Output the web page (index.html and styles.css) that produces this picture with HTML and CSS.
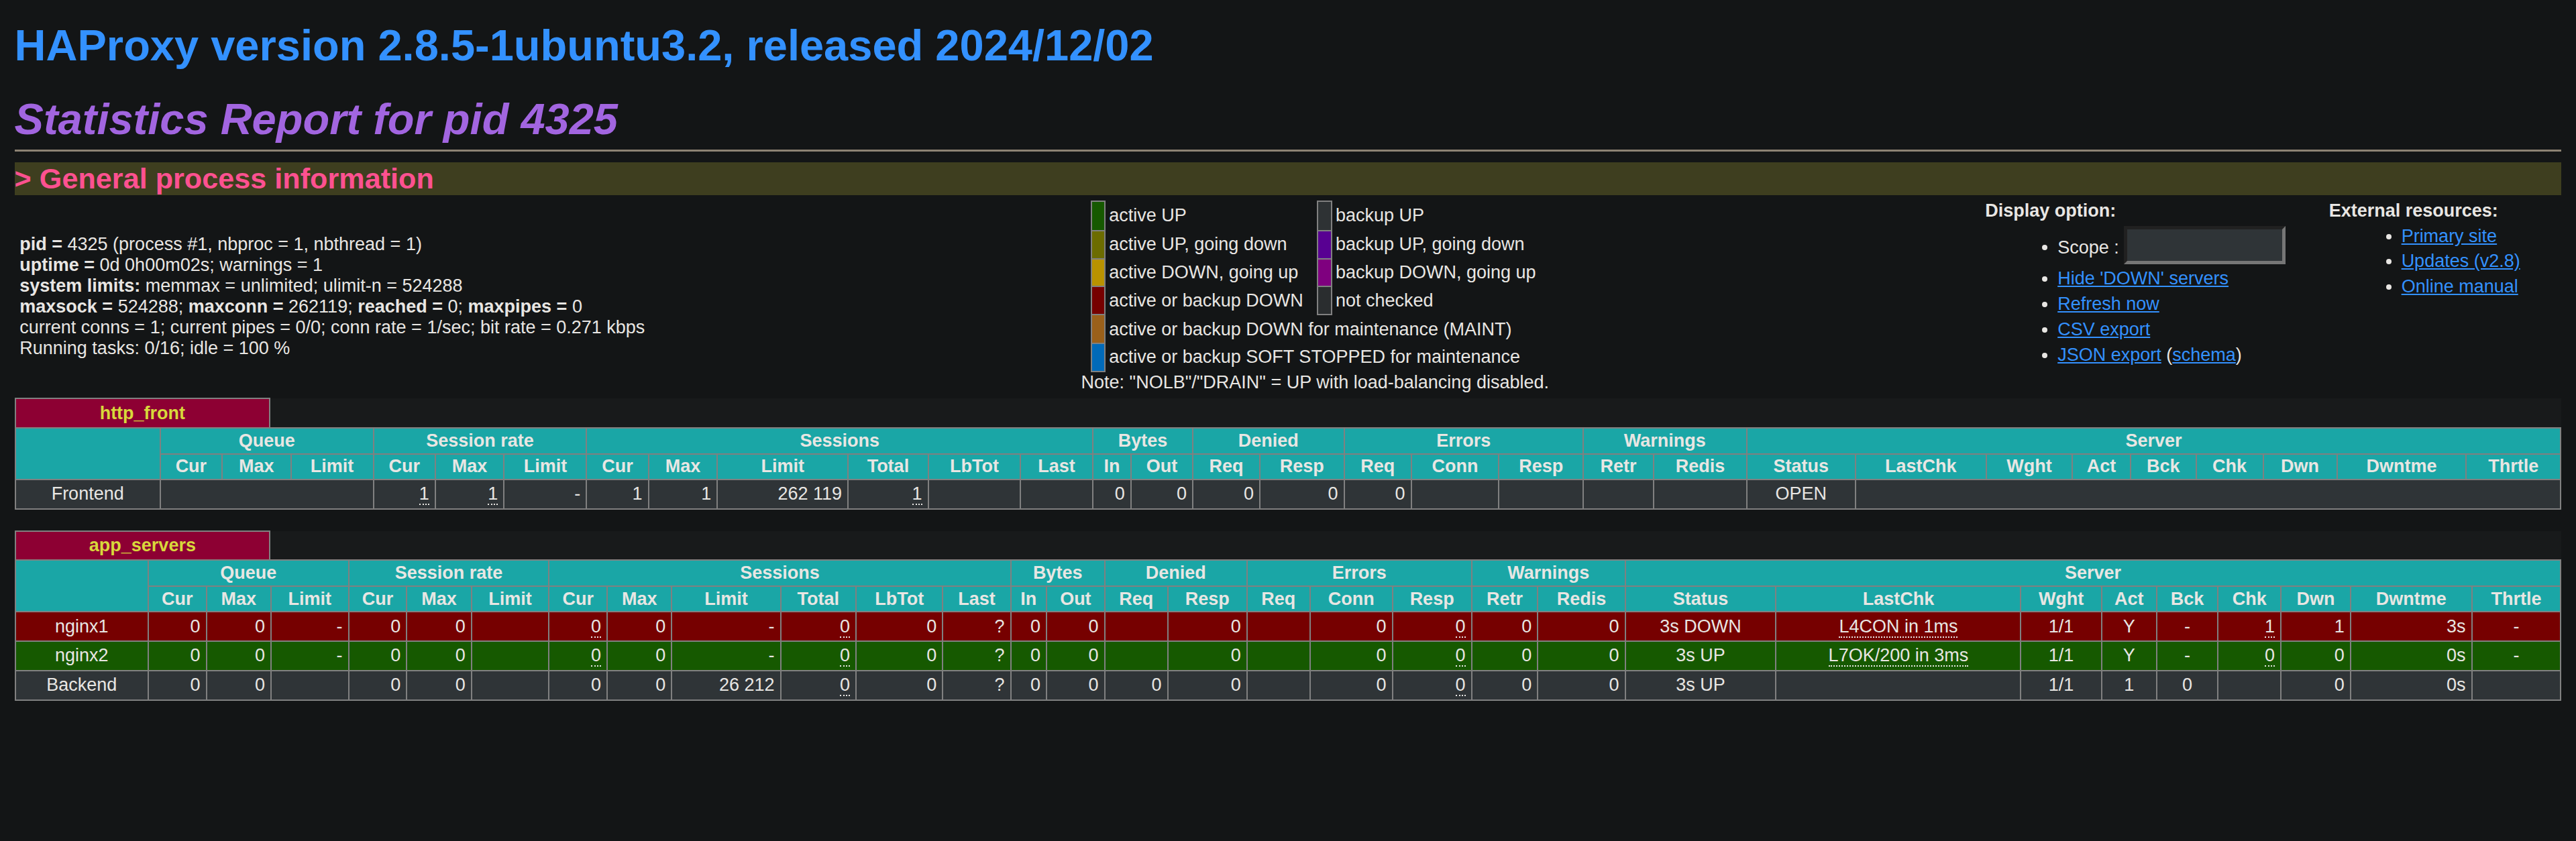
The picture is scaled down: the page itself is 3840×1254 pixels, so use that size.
FILE: index.html
```html
<!DOCTYPE html>
<html>
<head>
<meta charset="utf-8">
<title>Statistics Report for HAProxy</title>
<link rel="stylesheet" href="styles.css">
</head>
<body>
<h1 class="title"><a class="title-link" href="#">HAProxy version 2.8.5-1ubuntu3.2, released 2024/12/02</a></h1>
<h2 class="subtitle">Statistics Report for pid 4325</h2>
<hr class="hr">
<h3 class="section">&gt; General process information</h3>
<table class="info">
<tr>
<td class="col-proc"><p class="proc">
<b>pid = </b> 4325 (process #1, nbproc = 1, nbthread = 1)<br>
<b>uptime = </b> 0d 0h00m02s; warnings = 1<br>
<b>system limits:</b> memmax = unlimited; ulimit-n = 524288<br>
<b>maxsock = </b> 524288; <b>maxconn = </b> 262119; <b>reached = </b> 0; <b>maxpipes = </b> 0<br>
current conns = 1; current pipes = 0/0; conn rate = 1/sec; bit rate = 0.271 kbps<br>
Running tasks: 0/16; idle = 100 %</p>
</td>
<td class="col-legend">
<table class="lgd">
<tr><td class="active-up">&nbsp;</td><td class="noborder">active UP </td><td class="backup-up">&nbsp;</td><td class="noborder">backup UP </td></tr>
<tr><td class="active-going-down"></td><td class="noborder">active UP, going down </td><td class="backup-going-down"></td><td class="noborder">backup UP, going down </td></tr>
<tr><td class="active-going-up"></td><td class="noborder">active DOWN, going up </td><td class="backup-going-up"></td><td class="noborder">backup DOWN, going up </td></tr>
<tr><td class="active-down"></td><td class="noborder">active or backup DOWN &nbsp;</td><td class="no-check"></td><td class="noborder">not checked </td></tr>
<tr><td class="maintain"></td><td class="noborder" colspan="3">active or backup DOWN for maintenance (MAINT) &nbsp;</td></tr>
<tr><td class="draining"></td><td class="noborder" colspan="3">active or backup SOFT STOPPED for maintenance &nbsp;</td></tr>
</table>
Note: &quot;NOLB&quot;/&quot;DRAIN&quot; = UP with load-balancing disabled.</td>
<td class="col-opts"><b>Display option:</b><ul class="opts">
<li><div class="scope">Scope : <input class="scope-input" type="text" size="8"></div></li>
<li><a href="#">Hide 'DOWN' servers</a></li>
<li><a href="#">Refresh now</a></li>
<li><a href="#">CSV export</a></li>
<li><a href="#">JSON export</a> (<a href="#">schema</a>)</li>
</ul></td>
<td class="col-opts"><b>External resources:</b><ul class="opts">
<li><a href="#">Primary site</a></li>
<li><a href="#">Updates (v2.8)</a></li>
<li><a href="#">Online manual</a></li>
</ul></td>
</tr>
</table>

<div class="proxy">
<table class="tbl">
<tr class="titre"><th class="pxname"><a class="px" href="#">http_front</a></th><th class="empty"></th></tr>
</table>
<table class="tbl">
<tr class="titre"><th rowspan="2"></th><th colspan="3">Queue</th><th colspan="3">Session rate</th><th colspan="6">Sessions</th><th colspan="2">Bytes</th><th colspan="2">Denied</th><th colspan="3">Errors</th><th colspan="2">Warnings</th><th colspan="9">Server</th></tr>
<tr class="titre"><th>Cur</th><th>Max</th><th>Limit</th><th>Cur</th><th>Max</th><th>Limit</th><th>Cur</th><th>Max</th><th>Limit</th><th>Total</th><th>LbTot</th><th>Last</th><th>In</th><th>Out</th><th>Req</th><th>Resp</th><th>Req</th><th>Conn</th><th>Resp</th><th>Retr</th><th>Redis</th><th>Status</th><th>LastChk</th><th>Wght</th><th>Act</th><th>Bck</th><th>Chk</th><th>Dwn</th><th>Dwntme</th><th>Thrtle</th></tr>
<tr class="frontend"><td class="ac"><a class="lfsb" href="#">Frontend</a></td><td colspan="3"></td><td><u>1</u></td><td><u>1</u></td><td>-</td><td>1</td><td>1</td><td>262 119</td><td><u>1</u></td><td></td><td></td><td>0</td><td>0</td><td>0</td><td>0</td><td>0</td><td></td><td></td><td></td><td></td><td class="ac">OPEN</td><td colspan="8"></td></tr>
</table>
</div>

<div class="proxy">
<table class="tbl">
<tr class="titre"><th class="pxname"><a class="px" href="#">app_servers</a></th><th class="empty"></th></tr>
</table>
<table class="tbl">
<tr class="titre"><th rowspan="2"></th><th colspan="3">Queue</th><th colspan="3">Session rate</th><th colspan="6">Sessions</th><th colspan="2">Bytes</th><th colspan="2">Denied</th><th colspan="3">Errors</th><th colspan="2">Warnings</th><th colspan="9">Server</th></tr>
<tr class="titre"><th>Cur</th><th>Max</th><th>Limit</th><th>Cur</th><th>Max</th><th>Limit</th><th>Cur</th><th>Max</th><th>Limit</th><th>Total</th><th>LbTot</th><th>Last</th><th>In</th><th>Out</th><th>Req</th><th>Resp</th><th>Req</th><th>Conn</th><th>Resp</th><th>Retr</th><th>Redis</th><th>Status</th><th>LastChk</th><th>Wght</th><th>Act</th><th>Bck</th><th>Chk</th><th>Dwn</th><th>Dwntme</th><th>Thrtle</th></tr>
<tr class="row-down"><td class="ac"><a class="lfsb" href="#">nginx1</a></td><td>0</td><td>0</td><td>-</td><td>0</td><td>0</td><td></td><td><u>0</u></td><td>0</td><td>-</td><td><u>0</u></td><td>0</td><td>?</td><td>0</td><td>0</td><td></td><td>0</td><td></td><td>0</td><td><u>0</u></td><td>0</td><td>0</td><td class="ac">3s DOWN</td><td class="ac"><u>L4CON in 1ms</u></td><td class="ac">1/1</td><td class="ac">Y</td><td class="ac">-</td><td><u>1</u></td><td>1</td><td>3s</td><td class="ac">-</td></tr>
<tr class="row-up"><td class="ac"><a class="lfsb" href="#">nginx2</a></td><td>0</td><td>0</td><td>-</td><td>0</td><td>0</td><td></td><td><u>0</u></td><td>0</td><td>-</td><td><u>0</u></td><td>0</td><td>?</td><td>0</td><td>0</td><td></td><td>0</td><td></td><td>0</td><td><u>0</u></td><td>0</td><td>0</td><td class="ac">3s UP</td><td class="ac"><u>L7OK/200 in 3ms</u></td><td class="ac">1/1</td><td class="ac">Y</td><td class="ac">-</td><td><u>0</u></td><td>0</td><td>0s</td><td class="ac">-</td></tr>
<tr class="backend"><td class="ac"><a class="lfsb" href="#">Backend</a></td><td>0</td><td>0</td><td></td><td>0</td><td>0</td><td></td><td>0</td><td>0</td><td>26 212</td><td><u>0</u></td><td>0</td><td>?</td><td>0</td><td>0</td><td>0</td><td>0</td><td></td><td>0</td><td><u>0</u></td><td>0</td><td>0</td><td class="ac">3s UP</td><td class="ac"></td><td class="ac">1/1</td><td class="ac">1</td><td class="ac">0</td><td class="ac"></td><td>0</td><td>0s</td><td></td></tr>
</table>
</div>
</body>
</html>
```
FILE: styles.css
```css
html {
  background: #131516;
}
body {
  margin: 0 21.6px 21.6px;
  font-family: "Liberation Sans", Arial, Helvetica, sans-serif;
  font-size: 32.4px;
  font-weight: normal;
  color: #e8e6e3;
  background: #131516;
}
a {
  color: #3391ff;
}
.title {
  font-size: 65px;
  font-weight: bold;
  margin: 30px 0 35px;
}
.title-link {
  text-decoration: none;
  color: #3391ff;
}
.subtitle {
  font-size: 65px;
  font-weight: bold;
  font-style: italic;
  color: #a265e0;
  margin: 0;
}
.hr {
  margin: 8px 0 16px;
  border: 0;
  height: 3.3px;
  background: #8c8273;
}
.section {
  font-size: 43.2px;
  font-weight: bold;
  color: #ff5190;
  background: #3e3e1f;
  margin: 0;
}
.info {
  width: 100%;
  border-collapse: separate;
  border-spacing: 5.4px;
}
.info > tbody > tr > td {
  padding: 2.7px;
  font-size: 27px;
}
.col-proc {
  width: 1%;
  white-space: nowrap;
  text-align: left;
  vertical-align: middle;
}
.proc {
  margin: 27px 0;
}
.col-legend {
  text-align: center;
  white-space: nowrap;
  vertical-align: middle;
}
.col-opts {
  width: 1%;
  white-space: nowrap;
  text-align: left;
  vertical-align: top;
}
.opts {
  margin: 6.75px 0 27px;
  padding-left: 108px;
}
.opts li {
  margin-top: 6.75px;
  margin-right: 54px;
}
.scope-input {
  box-sizing: border-box;
  width: 241px;
  height: 57px;
  margin: 0;
  padding: 2.7px 5.4px;
  font-family: "Liberation Sans", Arial, sans-serif;
  font-size: 36px;
  color: #e8e6e3;
  background: #2f3437;
  border: 5px inset #767676;
  vertical-align: baseline;
}
.lgd {
  margin: 0 auto;
  border-collapse: collapse;
  text-align: left;
  font-size: 27px;
}
.lgd td {
  padding: 5.4px;
  border: 2.7px solid #808080;
}
.lgd td.noborder {
  border-style: none;
  white-space: nowrap;
}
.active-up { background: #165900; }
.active-going-down { background: #6c6c00; }
.active-going-up { background: #b99200; }
.active-down { background: #760000; }
.backup-up { background: #2e3234; }
.backup-going-down { background: #580092; }
.backup-going-up { background: #7f007f; }
.no-check { background: #2a2d2f; }
.maintain { background: #9a601a; }
.draining { background: #006ab9; }

.proxy {
  margin-bottom: 31px;
}
.tbl {
  width: 100%;
  border-collapse: collapse;
  border-style: none;
  font-size: 27px;
}
.tbl td {
  text-align: right;
  border: 2.7px solid #808080;
  padding: 5.4px 8.1px;
  white-space: nowrap;
}
.tbl td.ac {
  text-align: center;
}
.tbl th {
  border: 2.7px solid #808080;
  padding: 2.7px;
  font-weight: bold;
  white-space: nowrap;
}
.titre {
  background: #1aa6a6;
  color: #e8e6e3;
  text-align: center;
}
.tbl th.pxname {
  width: 10%;
  background: #8d0033;
  color: #d8d83b;
  border-style: solid solid none solid;
  padding: 5.4px 8.1px;
}
.tbl th.empty {
  width: 90%;
  border-style: none;
  background: #181a1b;
}
a.px {
  color: #d8d83b;
  text-decoration: none;
}
a.lfsb {
  color: #e8e6e3;
  text-decoration: none;
}
.frontend { background: #2f3437; }
.backend { background: #2f3437; }
.row-down { background: #760000; }
.row-up { background: #165900; }
u {
  text-decoration: none;
  border-bottom: 2.7px dotted #e8e6e3;
}
```
